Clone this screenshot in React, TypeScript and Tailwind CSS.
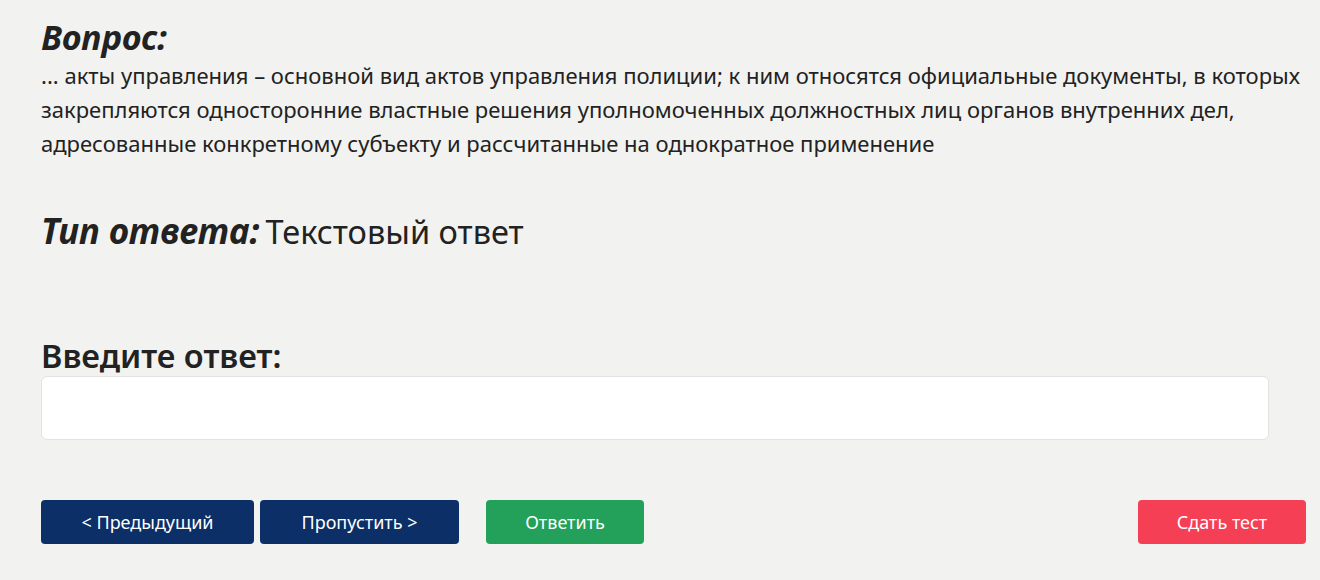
import React from "react";

export default function App() {
  const font = { fontFamily: '"Noto Sans", "Open Sans", sans-serif' };
  return (
    <div className="w-[1320px] h-[580px] bg-[#f2f2f1] text-[#222222] overflow-hidden" style={font}>
      <div className="pl-[41px] pr-[8px] pt-[17px]">
        <h2 className="text-[34px] leading-[40px] font-bold italic">Вопрос:</h2>
        <p className="text-[22px] leading-[34px] mt-[1px] pr-[6px]">
          ... акты управления – основной вид актов управления полиции; к ним относятся официальные документы, в которых закрепляются односторонние властные решения уполномоченных должностных лиц органов внутренних дел, адресованные конкретному субъекту и рассчитанные на однократное применение
        </p>
        <div className="mt-[49px] flex items-baseline gap-[6px] leading-[44px]">
          <span className="text-[35px] font-bold italic">Тип ответа:</span>
          <span className="text-[32.5px]">Текстовый ответ</span>
        </div>
        <div className="mt-[82px] text-[32.5px] leading-[40px] font-semibold">Введите ответ:</div>
        <div className="mr-[43px] h-[64px] bg-white border border-[#e3e3e3] rounded-[6px]"></div>
        <div className="mt-[60px] flex items-center pr-[6px]">
          <button className="w-[213px] h-[44px] rounded-[4px] bg-[#0b2f66] text-white text-[18px]">&lt; Предыдущий</button>
          <button className="ml-[6px] w-[199px] h-[44px] rounded-[4px] bg-[#0b2f66] text-white text-[18px]">Пропустить &gt;</button>
          <button className="ml-[27px] w-[158px] h-[44px] rounded-[4px] bg-[#23a05a] text-white text-[18px]">Ответить</button>
          <div className="flex-1"></div>
          <button className="w-[168px] h-[44px] rounded-[4px] bg-[#f43f55] text-white text-[18px]">Сдать тест</button>
        </div>
      </div>
    </div>
  );
}
